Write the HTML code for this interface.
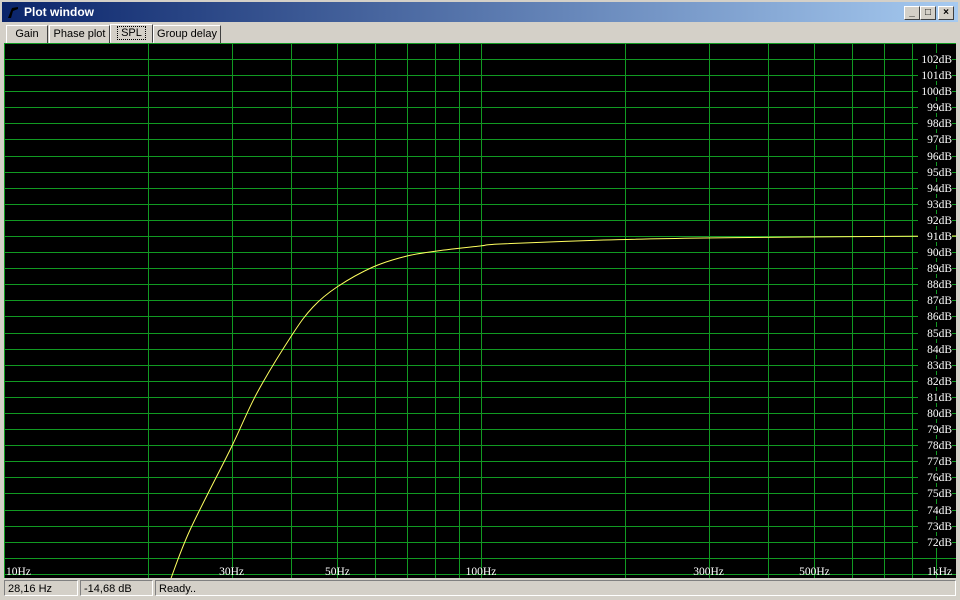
<!DOCTYPE html>
<html><head><style>
body{margin:0;width:960px;height:600px;background:#d4d0c8;overflow:hidden;position:relative;font-family:"Liberation Sans",sans-serif;font-size:11px}
.title{position:absolute;left:2px;top:2px;width:956px;height:20px;background:linear-gradient(90deg,#0a246a,#a6caf0);color:#fff;font-weight:bold;font-size:12px}
.title span{position:absolute;left:22px;top:3px}
.btn{position:absolute;top:4px;width:14px;height:12px;background:#d4d0c8;border:1px solid;border-color:#fff #404040 #404040 #fff;font-size:10px;color:#000;text-align:center;line-height:12px;font-weight:bold}
.tab{position:absolute;top:25px;height:17px;border:1px solid;border-color:#fff #404040 #d4d0c8 #fff;line-height:17px;text-align:center;color:#000;font-size:11px}
.sp{position:absolute;top:580px;height:16px;border:1px solid;border-color:#808080 #fff #fff #808080;line-height:16px;padding-left:3px;box-sizing:border-box}
</style></head><body>
<div class="title"><svg style="position:absolute;left:4px;top:3px" width="14" height="14"><path d="M2 13 L5 13 L7 6 L12 4 L12 2 L6 3 Z" fill="#000"/></svg><span>Plot window</span>
<div class="btn" style="left:902px">_</div><div class="btn" style="left:918px">□</div><div class="btn" style="left:936px">×</div></div>
<div class="tab" style="left:6px;width:40px">Gain</div>
<div class="tab" style="left:49px;width:59px">Phase plot</div>
<div class="tab" style="left:110px;width:41px;top:24px;line-height:16px"><span style="outline:1px dotted #000;padding:0 3px">SPL</span></div>
<div class="tab" style="left:153px;width:66px">Group delay</div>
<svg style="position:absolute;left:4px;top:43px" width="952" height="535">
<rect width="952" height="535" fill="#000"/>
<g id="g" fill="#119a22" shape-rendering="crispEdges"></g>
<path id="c" fill="none" stroke="#ffff60" stroke-width="1"/>
<g id="t" font-family="'Liberation Serif',serif" font-size="11.5" fill="#fff"></g>
</svg>
<div class="sp" style="left:4px;width:74px">28,16 Hz</div>
<div class="sp" style="left:80px;width:73px">-14,68 dB</div>
<div class="sp" style="left:155px;width:801px">Ready..</div>
<script>
var g=document.getElementById('g'),t=document.getElementById('t'),s='',u='';
function X(f){return 477*Math.log10(f/10);}
for(var d=10;d<=1000;d*=10)for(var k=1;k<10;k++){var f=d*k;if(f>1000)break;var x=Math.round(X(f));s+='<rect x="'+x+'" y="0" width="1" height="535"/>';}
for(var db=103;db>=70;db--){var y=Math.round(16+16.09*(102-db));s+='<rect x="0" y="'+y+'" width="952" height="1"/>';
if(db<=102&&db>=72){u+='<rect x="914" y="'+(y-6)+'" width="34" height="12" fill="#000"/><text x="948" y="'+(y+4)+'" text-anchor="end">'+db+'dB</text>';}}
g.innerHTML=s;
var L=[[10,'10Hz','start',2],[30,'30Hz','middle',0],[50,'50Hz','middle',0],[100,'100Hz','middle',0],[300,'300Hz','middle',0],[500,'500Hz','middle',0],[1000,'1kHz','end',-4]];
L.forEach(function(a){var x=a[3]?(a[0]==10?2:948):X(a[0]);u+='<text x="'+x+'" y="532" text-anchor="'+a[2]+'">'+a[1]+'</text>';});
t.innerHTML=u;
var P=[[166,538],[186,487],[227,405],[253,350],[288,292],[309,264],[333,244],[369,224],[403,213],[433,208],[476,203],[496,201],[600,197],[700,195],[800,194],[952,193]];
var dd='M'+P[0][0]+' '+P[0][1];
for(var i=0;i<P.length-1;i++){var p0=P[Math.max(0,i-1)],p1=P[i],p2=P[i+1],p3=P[Math.min(P.length-1,i+2)];
dd+=' C'+(p1[0]+(p2[0]-p0[0])/6)+' '+(p1[1]+(p2[1]-p0[1])/6)+' '+(p2[0]-(p3[0]-p1[0])/6)+' '+(p2[1]-(p3[1]-p1[1])/6)+' '+p2[0]+' '+p2[1];}
document.getElementById('c').setAttribute('d',dd);
</script>
</body></html>
